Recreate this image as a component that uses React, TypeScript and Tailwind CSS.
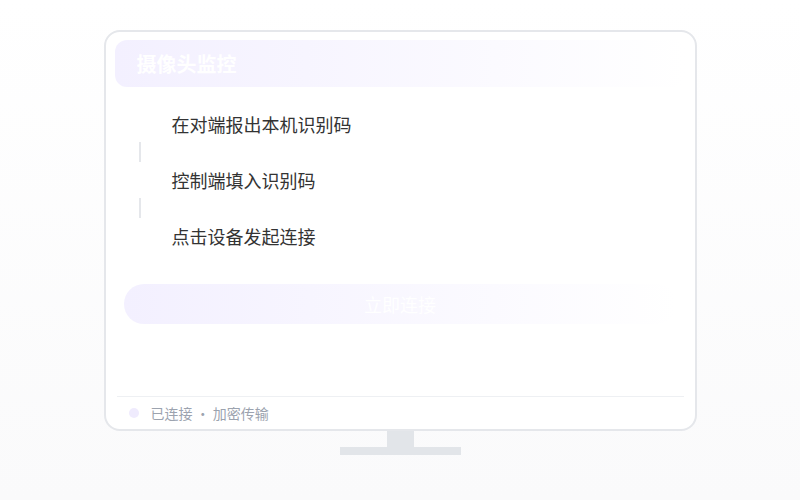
import React from "react";

const font = { fontFamily: '"Noto Sans CJK SC", "Noto Sans", sans-serif' };

export default function App() {
  const steps = ["在对端报出本机识别码", "控制端填入识别码", "点击设备发起连接"];
  return (
    <div
      className="w-[800px] h-[500px] bg-gradient-to-b from-white to-[#fafafb] flex flex-col items-center pt-[30px]"
      style={font}
    >
      <div className="w-[593px] h-[401px] border-2 border-[#e5e7eb] rounded-[16px] bg-white flex flex-col">
        <div className="mx-[9px] mt-[8px] h-[47px] rounded-[12px] bg-gradient-to-r from-[#f3f0ff] to-white/0 flex items-center pl-[22px]">
          <span className="text-white font-bold text-[20px] leading-none">摄像头监控</span>
        </div>
        <div className="flex flex-col pl-[33px] pt-[25px]">
          {steps.map((s, i) => (
            <div key={s} className="flex flex-col">
              <div className="pl-[33px] text-[18px] leading-[24px] text-[#333333]">{s}</div>
              {i < steps.length - 1 && (
                <div className="w-[2px] h-[20px] my-[6px] bg-[#e5e7eb]" />
              )}
            </div>
          ))}
        </div>
        <div className="mx-[18px] mt-[36px] h-[40px] rounded-full bg-gradient-to-r from-[#f3f0ff] to-white/0 flex items-center justify-center">
          <span className="text-white text-[18px] leading-none">立即连接</span>
        </div>
        <div className="flex-1" />
        <div className="mx-[11px] border-t border-[#eef0f3] h-[33px] flex items-center pl-[12px] gap-[12px]">
          <span className="w-[10px] h-[10px] rounded-full bg-[#efebfd]" />
          <span className="text-[14px] text-[#9ca3af] leading-none">已连接 · 加密传输</span>
        </div>
      </div>
      <div className="w-[27px] h-[16px] bg-[#e2e5e9]" />
      <div className="w-[121px] h-[8px] bg-[#e2e5e9]" />
    </div>
  );
}
